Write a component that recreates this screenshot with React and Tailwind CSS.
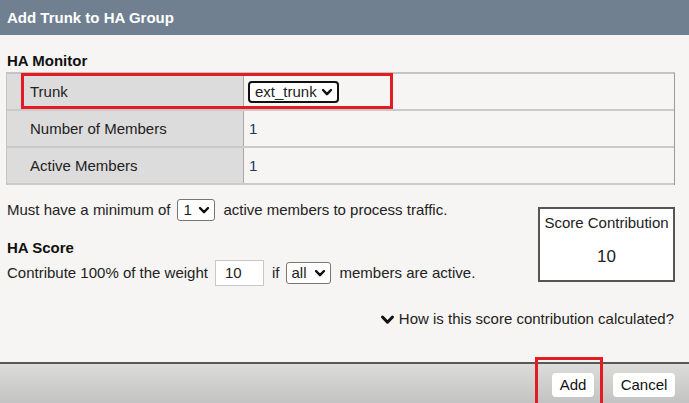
import React from "react";

function Chevron({ className = "" }) {
  return (
    <svg viewBox="0 0 12 12" className={className} fill="none">
      <polyline points="2,4 6,8.2 10,4" stroke="#111" strokeWidth="2.4" strokeLinecap="round" strokeLinejoin="round" />
    </svg>
  );
}

function Row({ label, children }) {
  return (
    <div className="grid grid-cols-[237px_1fr] border-b-2 border-[#cacaca]">
      <div className="bg-[#dcdcdc] border-r border-[#a9a9a9] pl-[23px] flex items-center h-[35px]">{label}</div>
      <div className="pl-[5px] flex items-center h-[35px]">{children}</div>
    </div>
  );
}

export default function App() {
  return (
    <div className="relative w-[689px] h-[403px] overflow-hidden bg-[#f6f5f3] flex flex-col font-['Liberation_Sans',Arial,sans-serif] text-[15px] leading-[18px] text-[#222]">
      <div className="h-[35px] bg-[#708090] text-white font-bold flex items-center px-[7px] shrink-0">
        Add Trunk to HA Group
      </div>
      <div className="flex-1 pl-[6px] pr-[14px]">
        <div className="font-bold mt-[17px] pl-[1px] text-[#111]">HA Monitor</div>
        <div className="relative mt-[2px] border-t-2 border-l border-r border-[#c4c4c4] border-r-[#9a9a9a]">
          <Row label="Trunk">
            <div className="-ml-[1px] h-[22px] w-[91px] border-2 border-[#111] rounded-[4px] bg-white flex items-center justify-between pl-[5px] pr-[4px]">
              <span>ext_trunk</span>
              <Chevron className="w-[12px] h-[12px]" />
            </div>
          </Row>
          <Row label="Number of Members"><span className="text-[#1a3a6a]">1</span></Row>
          <Row label="Active Members"><span className="text-[#1a3a6a]">1</span></Row>
          <div className="absolute left-[14px] top-[-1px] w-[372px] h-[36px] border-[3px] border-[#e31b23]" />
        </div>
        <div className="flex items-start mt-[14px]">
          <div className="flex-1 pl-[1px]">
            <div className="flex items-center h-[22px]">
              <span>Must have a minimum of</span>
              <div className="ml-[7px] mr-[8px] h-[22px] w-[38px] border border-[#767676] rounded-[3px] bg-white flex items-center justify-between pl-[5px] pr-[4px]">
                <span>1</span>
                <Chevron className="w-[12px] h-[12px]" />
              </div>
              <span>active members to process traffic.</span>
            </div>
            <div className="font-bold mt-[18px] text-[#111]">HA Score</div>
            <div className="flex items-center h-[26px] mt-[3px]">
              <span>Contribute 100% of the weight</span>
              <div className="ml-[7px] h-[26px] w-[49px] border border-[#c8c8c8] bg-white flex items-center pl-[9px]">10</div>
              <span className="ml-[8px]">if</span>
              <div className="ml-[7px] mr-[8px] h-[22px] w-[45px] border border-[#767676] rounded-[3px] bg-white flex items-center justify-between pl-[4px] pr-[4px]">
                <span>all</span>
                <Chevron className="w-[12px] h-[12px]" />
              </div>
              <span>members are active.</span>
            </div>
          </div>
          <div className="mt-[8px] w-[137px] h-[75px] border-2 border-[#555] bg-white flex flex-col items-center">
            <div className="mt-[5px]">Score Contribution</div>
            <div className="mt-[15px] text-[17px] leading-[20px]">10</div>
          </div>
        </div>
        <div className="flex justify-end items-center mt-[24px] pr-[1px]">
          <Chevron className="w-[15px] h-[15px] mr-[4px]" />
          <span>How is this score contribution calculated?</span>
        </div>
      </div>
      <div className="h-[41px] shrink-0 border-t-2 border-[#585858] bg-gradient-to-b from-[#dcdcda] to-[#c3c3c3] flex justify-end items-start pt-[9px] pr-[14px] gap-[19px]">
        <button className="h-[24px] w-[42px] bg-white rounded-[4px] text-[#111]">Add</button>
        <button className="h-[24px] w-[62px] bg-white rounded-[4px] text-[#111]">Cancel</button>
      </div>
      <div className="absolute left-[535px] top-[357px] w-[68px] h-[50px] border-[3px] border-[#e31b23]" />
    </div>
  );
}
